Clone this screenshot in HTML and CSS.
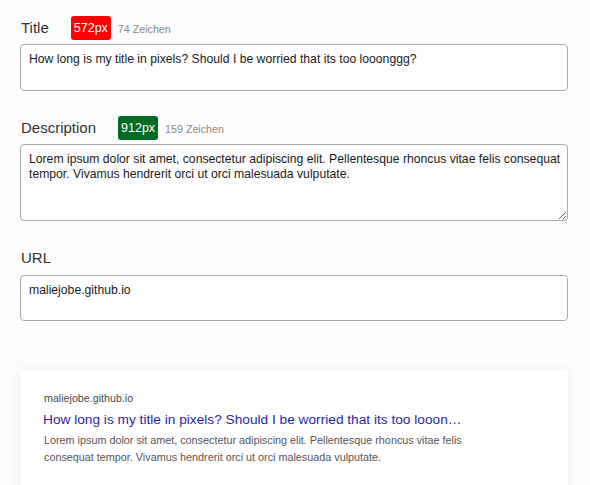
FILE: index.html
```html
<!DOCTYPE html>
<html lang="de">
<head>
<meta charset="utf-8">
<title>SERP Preview</title>
<link rel="stylesheet" href="styles.css">
</head>
<body>
<main class="page">
  <section class="field">
    <div class="field-head">
      <label class="field-label" for="t">Title</label>
      <span class="badge badge-bad">572px</span>
      <span class="count">74 Zeichen</span>
    </div>
    <textarea id="t" class="box box-short">How long is my title in pixels? Should I be worried that its too looonggg?</textarea>
  </section>

  <section class="field">
    <div class="field-head">
      <label class="field-label" for="d">Description</label>
      <span class="badge badge-ok">912px</span>
      <span class="count">159 Zeichen</span>
    </div>
    <textarea id="d" class="box box-tall">Lorem ipsum dolor sit amet, consectetur adipiscing elit. Pellentesque rhoncus vitae felis consequat tempor. Vivamus hendrerit orci ut orci malesuada vulputate.</textarea>
  </section>

  <section class="field">
    <div class="field-head field-head-plain">
      <label class="field-label" for="u">URL</label>
    </div>
    <textarea id="u" class="box box-url">maliejobe.github.io</textarea>
  </section>

  <section class="preview">
    <div class="snippet">
      <div class="snippet-url">maliejobe.github.io</div>
      <div class="snippet-title">How long is my title in pixels? Should I be worried that its too looonggg?</div>
      <div class="snippet-desc">Lorem ipsum dolor sit amet, consectetur adipiscing elit. Pellentesque rhoncus vitae felis consequat tempor. Vivamus hendrerit orci ut orci malesuada vulputate.</div>
    </div>
  </section>
</main>
</body>
</html>
```

FILE: styles.css
```css
html, body {
  margin: 0;
  padding: 0;
  background: #fdfdfe;
  font-family: "Liberation Sans", Arial, sans-serif;
  color: #333;
  overflow: hidden;
}

.page {
  padding: 16px 22px 0 20px;
  display: flex;
  flex-direction: column;
}

.field {
  display: flex;
  flex-direction: column;
  gap: 4px;
  margin-bottom: 25px;
}

.field-head {
  display: flex;
  align-items: center;
  height: 24px;
}

.field-head-plain {
  margin-top: 0;
  margin-bottom: 1px;
}

.field-label {
  font-size: 15px;
  color: #333;
  margin: -2px 22px 0 1px;
}

.badge {
  color: #fff;
  font-size: 12.5px;
  height: 24px;
  line-height: 24px;
  padding: 0 3px;
  border-radius: 3px;
  margin-right: 7px;
}

.badge-bad { background: #ff0000; }
.badge-ok { background: #006b21; }

.count {
  font-size: 10.7px;
  color: #888;
  margin-top: 1px;
}

.box {
  box-sizing: border-box;
  width: 548px;
  margin: 0;
  padding: 7px 4px 7px 8px;
  border: 1px solid #a9a9a9;
  border-radius: 4px;
  background: #fff;
  font-family: "Liberation Sans", Arial, sans-serif;
  font-size: 12.2px;
  line-height: 15px;
  color: #1a1a1a;
  overflow: hidden;
  display: block;
}

.box-short { height: 47px; resize: none; }
.box-tall { height: 77px; resize: vertical; }
.box-url { height: 46px; resize: none; }

.preview {
  margin-top: 24px;
  width: 548px;
  background: #fff;
  box-shadow: 0 0 8px rgba(60, 40, 90, 0.09);
  padding: 20px 24px 30px;
  box-sizing: border-box;
}

.snippet {
  width: 420px;
}

.snippet-url {
  font-size: 10.7px;
  line-height: 16px;
  color: #4a4a4a;
  margin-bottom: 3px;
}

.snippet-title {
  font-size: 13.7px;
  line-height: 22px;
  color: #2b1fa0;
  white-space: nowrap;
  overflow: hidden;
  text-overflow: ellipsis;
  margin-left: -1px;
  width: 422px;
}

.snippet-desc {
  font-size: 10.8px;
  line-height: 17px;
  color: #555;
  margin-top: 1px;
}
```
